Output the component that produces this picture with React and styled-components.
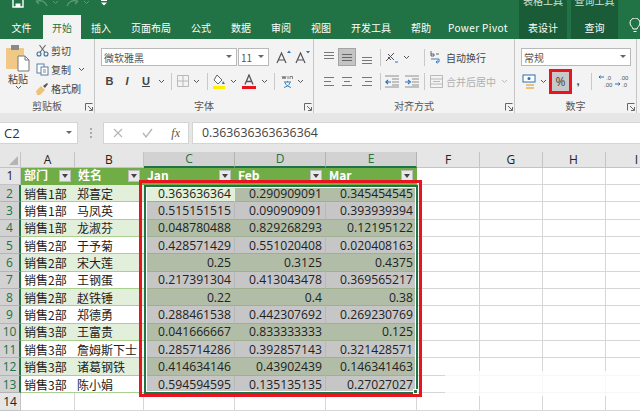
import React from "react";
import styled, { createGlobalStyle } from "styled-components";

const Global = createGlobalStyle`
  html, body { margin: 0; padding: 0; background: #fff; }
  body { font-family: "Noto Sans CJK SC", "Noto Sans", sans-serif; }
`;

const Page = styled.div`
  width: 640px;
  height: 411px;
  overflow: hidden;
  display: flex;
  flex-direction: column;
  background: #fff;
`;

// green title + tabs
const Head = styled.div`
  height: 39px;
  flex: none;
  display: flex;
  background: #217346;
  color: #fff;
  font-size: 10px;
`;
const HeadMain = styled.div`
  width: 519px;
  flex: none;
  display: flex;
  flex-direction: column;
`;
const Qat = styled.div`
  height: 15px;
  display: flex;
  align-items: flex-start;
  padding-left: 12px;
  overflow: hidden;
`;
const QatItem = styled.div`
  margin-left: ${(p) => p.$ml}px;
  display: flex;
  flex: none;
`;
const Tabs = styled.div`
  height: 24px;
  display: flex;
`;
const Tab = styled.div`
  width: ${(p) => p.$w}px;
  display: flex;
  align-items: center;
  justify-content: center;
  white-space: nowrap;
  background: ${(p) => (p.$active ? "#f3f3f3" : "transparent")};
  color: ${(p) => (p.$active ? "#217346" : "#fff")};
  letter-spacing: ${(p) => (p.$sp ? "0.4px" : "0")};
`;
const Context = styled.div`
  width: ${(p) => p.$w}px;
  margin-right: ${(p) => p.$gap}px;
  flex: none;
  background: #1a5c38;
  display: flex;
  flex-direction: column;
  align-items: center;
`;
const ContextTitle = styled.div`
  height: 15px;
  width: 100%;
  overflow: hidden;
  text-align: center;
  line-height: 1px;
  color: #cfe3d7;
  white-space: nowrap;
`;
const ContextTab = styled.div`
  height: 24px;
  display: flex;
  align-items: center;
`;
const Bulb = styled.div`
  margin: 18px 0 0 11px;
`;

// ribbon
const Ribbon = styled.div`
  height: 74px;
  flex: none;
  display: flex;
  background: #f3f3f3;
  color: #444;
  font-size: 10px;
`;
const Group = styled.div`
  position: relative;
  width: ${(p) => p.$w}px;
  flex: none;
  display: flex;
  flex-direction: column;
  box-sizing: border-box;
  border-right: 1px solid #c6c6c6;
`;
const GroupBody = styled.div`
  height: 58px;
  box-sizing: border-box;
  padding: 9px 0 0 ${(p) => p.$pad || 0}px;
  display: ${(p) => (p.$row ? "flex" : "block")};
`;
const GroupLabel = styled.div`
  height: 16px;
  line-height: 17px;
  text-align: center;
  color: #555;
`;
const Launcher = styled.div`
  position: absolute;
  right: 1px;
  bottom: 2px;
  display: flex;
`;
const PasteCol = styled.div`
  width: 36px;
  margin-top: -3px;
  display: flex;
  flex-direction: column;
  align-items: center;
  line-height: 13px;
`;
const ClipCol = styled.div`
  margin-top: -5px;
  display: flex;
  flex-direction: column;
  gap: 4px;
`;
const ClipRow = styled.div`
  height: 15px;
  display: flex;
  align-items: center;
  gap: 2px;
  white-space: nowrap;
`;
const ToolRow = styled.div`
  height: ${(p) => p.$h || 20}px;
  margin-bottom: ${(p) => p.$mb || 0}px;
  display: flex;
  align-items: center;
`;
const Slot = styled.div`
  width: ${(p) => p.$w}px;
  flex: none;
  display: flex;
  align-items: center;
  justify-content: center;
  font-family: "Liberation Sans", sans-serif;
  font-size: 11px;
  color: #444;
`;
const Sep = styled.div`
  width: ${(p) => p.$w}px;
  flex: none;
  height: 17px;
  background: linear-gradient(#c9c9c9, #c9c9c9) center / 1px 100% no-repeat;
`;
const Combo = styled.div`
  width: ${(p) => p.$w}px;
  height: 18px;
  margin-right: ${(p) => p.$mr || 0}px;
  flex: none;
  box-sizing: border-box;
  background: #fff;
  border: 1px solid #b9b9b9;
  display: flex;
  align-items: center;
  justify-content: space-between;
  padding: 0 4px 0 2px;
  color: #555;
`;
const SelectedBtn = styled.div`
  width: 18px;
  height: 18px;
  flex: none;
  box-sizing: border-box;
  background: #c4c4c4;
  border: 1px solid #a4a4a4;
  display: flex;
  align-items: center;
  justify-content: center;
`;
const PercentBtn = styled.div`
  width: 23px;
  height: 25px;
  flex: none;
  box-sizing: border-box;
  background: #c8c8c8;
  border: 3px solid #e8141f;
  display: flex;
  align-items: center;
  justify-content: center;
  font-family: "Open Sans", sans-serif;
  font-size: 12px;
  color: #444;
`;
const WrapText = styled.div`
  white-space: nowrap;
  color: ${(p) => (p.$off ? "#b0b0b0" : "#444")};
`;

// formula bar
const FormulaBar = styled.div`
  height: 39px;
  flex: none;
  box-sizing: border-box;
  padding: 9px 0 8px;
  display: flex;
  background: #e6e6e6;
`;
const NameBox = styled.div`
  width: 78px;
  box-sizing: border-box;
  background: #fff;
  border: 1px solid #d4d4d4;
  border-left: 0;
  display: flex;
  align-items: center;
  justify-content: space-between;
  padding: 0 5px 0 4px;
  font-family: "Open Sans", sans-serif;
  font-size: 13px;
  color: #333;
`;
const Dots = styled.div`
  width: 25px;
  display: flex;
  align-items: center;
  justify-content: center;
`;
const FnBox = styled.div`
  width: 86px;
  margin-right: 3px;
  box-sizing: border-box;
  background: #fff;
  border: 1px solid #d4d4d4;
  display: flex;
  align-items: center;
  justify-content: space-between;
  padding: 0 8px 0 9px;
`;
const Fx = styled.i`
  font-family: "Liberation Serif", serif;
  color: #555;
  font-size: 12px;
`;
const FormulaInput = styled.div`
  flex: 1;
  box-sizing: border-box;
  background: #fff;
  border: 1px solid #d4d4d4;
  border-right: 0;
  padding-left: 9px;
  line-height: 20px;
  font-family: "Open Sans", sans-serif;
  font-size: 12.3px;
  color: #444;
`;

// sheet
const SheetWrap = styled.div`
  position: relative;
  flex: 1;
  overflow: hidden;
`;
const Sheet = styled.div`
  display: grid;
  grid-template-columns: 21px 54px 69px 91px 91px 91px 63px 62.500px 63px 63px;
  grid-template-rows: 15.5px repeat(14, 17.36px);
  font-size: 12px;
  color: #222;
`;
const Corner = styled.div`
  background: #e6e6e6;
  border-right: 1px solid #c4c4c4;
  border-bottom: 1px solid #c4c4c4;
  box-sizing: border-box;
  display: flex;
  align-items: flex-end;
  justify-content: flex-end;
  padding: 0 2px 2px 0;
`;
const ColHead = styled.div`
  background: ${(p) => (p.$sel ? "#d2d2d2" : "#e6e6e6")};
  color: ${(p) => (p.$sel ? "#217346" : "#222")};
  border-right: 1px solid ${(p) => (p.$sel ? "#b4b4b4" : "#c4c4c4")};
  border-bottom: ${(p) => (p.$sel ? "2px solid #217346" : "1px solid #c4c4c4")};
  box-sizing: border-box;
  display: flex;
  align-items: center;
  justify-content: center;
  font-family: "Open Sans", sans-serif;
  font-size: 12px;
`;
const RowHead = styled.div`
  background: ${(p) => (p.$sel ? "#d2d2d2" : "#e6e6e6")};
  color: ${(p) => (p.$sel ? "#217346" : "#222")};
  border-right: ${(p) => (p.$sel ? "2px solid #217346" : "1px solid #c4c4c4")};
  border-bottom: 1px solid ${(p) => (p.$sel ? "#b4b4b4" : "#c4c4c4")};
  box-sizing: border-box;
  display: flex;
  align-items: center;
  justify-content: center;
  font-family: "Open Sans", sans-serif;
  font-size: 12px;
`;
const FieldHead = styled.div`
  background: #70ad47;
  color: #fff;
  font-weight: 700;
  box-sizing: border-box;
  padding: 0 3px 0 3px;
  display: flex;
  align-items: center;
  justify-content: space-between;
  border-right: 1px solid #70ad47;
  white-space: nowrap;
`;
const FieldName = styled.span`
  line-height: 12px;
  margin-top: -3px;
`;
const FilterBtn = styled.div`
  width: 12px;
  height: 12px;
  background: #e9e9e9;
  border: 1px solid #bcbcbc;
  box-sizing: border-box;
  display: flex;
  align-items: center;
  justify-content: center;
  flex: none;
  &::after {
    content: "";
    border: 3px solid transparent;
    border-top: 4px solid #444;
    margin-top: 3px;
  }
`;
const TextCell = styled.div`
  background: ${(p) => (p.$band ? "#e2efda" : "#fff")};
  border-bottom: 1px solid #a9d08e;
  box-sizing: border-box;
  padding-left: ${(p) => p.$pad}px;
  display: flex;
  align-items: center;
  white-space: nowrap;
  overflow: hidden;
`;
const NumCell = styled.div`
  background: ${(p) => (p.$active ? "#e2efda" : p.$band ? "#b2bda8" : "#c6c6c6")};
  border-bottom: 1px solid #9fb090;
  border-right: 1px solid ${(p) => (p.$active ? "#e2efda" : p.$band ? "#b2bda8" : "#b8b8b8")};
  box-sizing: border-box;
  padding-right: 3px;
  display: flex;
  align-items: center;
  justify-content: flex-end;
  font-family: "Open Sans", sans-serif;
  font-size: 12.2px;
  color: #222;
`;
const Blank = styled.div`
  border-right: 1px solid #d6d6d6;
  border-bottom: 1px solid #d6d6d6;
  box-sizing: border-box;
`;
const Selection = styled.div`
  position: absolute;
  left: 144px;
  top: 33px;
  width: 274px;
  height: 209px;
  box-sizing: border-box;
  border: 2px solid #217346;
  outline: 1px solid #fff;
  outline-offset: -3px;
  &::after {
    content: "";
    position: absolute;
    right: -2px;
    bottom: -2px;
    width: 5px;
    height: 5px;
    background: #217346;
    border: 1px solid #fff;
    box-sizing: border-box;
  }
`;
const RedBox = styled.div`
  position: absolute;
  left: 139px;
  top: 28px;
  width: 283px;
  height: 217px;
  box-sizing: border-box;
  border: 3px solid #e8141f;
`;
// the faint smear a watermark left over the grid
const Smear = styled.div`
  position: absolute;
  left: 445px;
  right: 0;
  top: 219px;
  height: 25px;
  background: rgba(255, 255, 255, 0.8);
`;

const Chev = ({ c = "#555" }) => (
  <svg width="7" height="5" viewBox="0 0 7 5"><path d="M1 1l2.5 2.5L6 1" fill="none" stroke={c} strokeWidth="1" /></svg>
);
const Caret = () => (
  <svg width="6" height="4" viewBox="0 0 6 4"><path d="M0 0h6L3 3z" fill="#666" /></svg>
);
const Lines = ({ widths, y = [2, 6, 10], c = "#777" }) => (
  <svg width="14" height="13" viewBox="0 0 14 13">
    {y.map((v, i) => (
      <rect key={i} x={widths[i][0]} y={v} width={widths[i][1]} height="1" fill={c} />
    ))}
  </svg>
);
const LauncherIcon = () => (
  <svg width="8" height="8" viewBox="0 0 8 8" fill="none" stroke="#666">
    <path d="M.5 7.500V.5h7" />
    <path d="M7.500 4v3.500H4M7 7L3 3" />
  </svg>
);
const PasteIcon = () => (
  <svg width="24" height="27" viewBox="0 0 24 27">
    <rect x="0" y="3" width="18" height="21" rx="1" fill="#f0c987" />
    <rect x="5" y="0" width="8" height="5" fill="#8a8a8a" />
    <path d="M12 11h7l4 4v11H12z" fill="#fff" stroke="#777" />
    <path d="M19 11v4h4" fill="none" stroke="#777" />
  </svg>
);
const CutIcon = () => (
  <svg width="13" height="13" viewBox="0 0 13 13" fill="none" stroke="#3c6ea5" strokeWidth="1.1">
    <circle cx="3" cy="10" r="2" />
    <circle cx="10" cy="10" r="2" />
    <path d="M4 8.5L9.5 1M9 8.5L3.5 1" stroke="#666" />
  </svg>
);
const CopyIcon = () => (
  <svg width="13" height="13" viewBox="0 0 13 13" fill="#fff" stroke="#5b7fa5">
    <rect x="1" y="1" width="7" height="9" />
    <rect x="5" y="4" width="7" height="8" />
    <path d="M7 7h3M7 9h3" stroke="#888" />
  </svg>
);
const BrushIcon = () => (
  <svg width="13" height="13" viewBox="0 0 13 13">
    <path d="M0 9l5-5 4 4-5 5H1z" fill="#efc27a" />
    <path d="M7 4l4-3 1 1-3 4z" fill="#555" />
  </svg>
);
const BigA = ({ up }) => (
  <svg width="15" height="15" viewBox="0 0 15 15">
    <path d="M1 13L5.5 3 10 13M3 10h5" fill="none" stroke="#555" strokeWidth="1.2" />
    <path d={up ? "M11 3l2-2.5L15 3z" : "M11 1h4l-2 2.5z"} fill="#2b6fb5" />
  </svg>
);
const BordersIcon = () => (
  <svg width="12" height="12" viewBox="0 0 12 12" fill="none" stroke="#b9b9b9">
    <path d="M.5.5h11v11H.5zM6 .5v11M.5 6h11" />
  </svg>
);
const FillIcon = () => (
  <svg width="14" height="15" viewBox="0 0 14 15">
    <path d="M5 1l5 5-4 4-4-4z" fill="#fff" stroke="#666" />
    <path d="M11 7l2 3h-3z" fill="#2b6fb5" />
    <rect x="1" y="12" width="12" height="3" fill="#ffee00" />
  </svg>
);
const FontColorIcon = () => (
  <svg width="14" height="15" viewBox="0 0 14 15">
    <path d="M3 10.5L7 1l4 9.5M4.5 7.5h5" fill="none" stroke="#555" strokeWidth="1.3" />
    <rect x="0" y="12" width="14" height="3" fill="#e8141f" />
  </svg>
);
const WenIcon = () => (
  <svg width="13" height="14" viewBox="0 0 13 14" fill="none">
    <path d="M1 2l1 3 1-3 1 3 1-3M7 5V2M9 5V2.5h2.5V5" stroke="#666" strokeWidth=".8" />
    <path d="M3 8h7M6.5 7v1M4 8.500c1 3 3 4 6 5M9 8.500c-1 3-3 4-6 5" stroke="#2b6fb5" strokeWidth=".9" />
  </svg>
);
const OrientIcon = () => (
  <svg width="14" height="13" viewBox="0 0 14 13" fill="none" stroke="#555">
    <path d="M1 10l8-8M3 6l3 3M3 3l6 6" strokeWidth="1" />
    <path d="M10 11h3" stroke="#2b6fb5" />
  </svg>
);
const IndentIcon = ({ right }) => (
  <svg width="14" height="13" viewBox="0 0 14 13">
    <path d="M0 1h14M7 4h7M7 7h7M7 10h7M0 12h14" stroke="#777" strokeWidth=".8" />
    <path d={right ? "M0 7h4M3 5l2.500 2L3 9" : "M6 7H1M3 5L.8 7 3 9"} fill="none" stroke="#2b6fb5" strokeWidth="1.1" />
  </svg>
);
const WrapIcon = () => (
  <svg width="12" height="15" viewBox="0 0 12 15" fill="none" stroke="#555" strokeWidth=".9">
    <path d="M1 1v5h3V4H1M6 4h3" />
    <path d="M1 9h8v3H6M7.500 10.500L6 12l1.500 1.500" stroke="#2b6fb5" />
  </svg>
);
const MergeIcon = () => (
  <svg width="13" height="13" viewBox="0 0 13 13" fill="none" stroke="#b9b9b9">
    <path d="M.5.5h12v12H.5zM.5 4h12M.5 9h12M3 6.500h7" />
  </svg>
);
const MoneyIcon = () => (
  <svg width="14" height="15" viewBox="0 0 14 15">
    <rect x="1" y="1" width="12" height="7" fill="#fff" stroke="#2b6fb5" />
    <circle cx="7" cy="4.500" r="1.500" fill="#2b6fb5" />
    <rect x="4" y="10" width="8" height="2" fill="#efc27a" />
    <rect x="4" y="13" width="8" height="2" fill="#efc27a" />
  </svg>
);
const DecIcon = ({ flip }) => (
  <svg width="15" height="14" viewBox="0 0 15 14" fontFamily="Liberation Sans" fontSize="6" fill="#555">
    <text x={flip ? 5 : 7} y="6">{flip ? ".00" : ".0"}</text>
    <text x={flip ? 7 : 5} y="13">{flip ? ".0" : ".00"}</text>
    <path d={flip ? "M0 10h5M3.500 8.500L5 10l-1.500 1.500" : "M5 3H0M1.500 1.500L0 3l1.500 1.500"} stroke="#2b6fb5" fill="none" />
  </svg>
);
const SaveIcon = () => (
  <svg width="12" height="10" viewBox="0 0 12 10">
    <path d="M1 -3h10v10H1z" fill="none" stroke="#fff" strokeWidth="1.400" />
    <rect x="3.500" y="3.500" width="5" height="3.500" fill="#fff" />
  </svg>
);
const ArrowIcon = ({ flip }) => (
  <svg width="13" height="7" viewBox="0 0 13 7" style={flip ? { transform: "scaleX(-1)" } : undefined}>
    <path d="M1 1l3 3M1 1h4M1 1c5-1 9 0 11 5" fill="none" stroke="#5f9a7a" strokeWidth="1.200" />
  </svg>
);
const QatMenuIcon = () => (
  <svg width="6" height="6" viewBox="0 0 6 6"><path d="M0 0h6v1H0zM0 2.500h6L3 5.500z" fill="#fff" /></svg>
);
const BulbIcon = () => (
  <svg width="12" height="16" viewBox="0 0 12 16" fill="none" stroke="#fff">
    <path d="M4 11c0-2-3-3-3-6a5 5 0 0 1 10 0c0 3-3 4-3 6zM4.500 13.500h3" />
  </svg>
);
const CrossIcon = () => (
  <svg width="10" height="10" viewBox="0 0 10 10"><path d="M1 1l8 8M9 1l-8 8" stroke="#b5b5b5" strokeWidth="1.100" /></svg>
);
const CheckIcon = () => (
  <svg width="11" height="10" viewBox="0 0 11 10"><path d="M1 5l3 4 6-8" fill="none" stroke="#b5b5b5" strokeWidth="1.300" /></svg>
);
const GripIcon = () => (
  <svg width="2" height="10" viewBox="0 0 2 10" fill="#aaa">
    <rect y="0" width="2" height="2" /><rect y="4" width="2" height="2" /><rect y="8" width="2" height="2" />
  </svg>
);

const tabs = [
  ["文件", 43], ["开始", 38, true], ["插入", 40], ["页面布局", 60], ["公式", 40], ["数据", 40],
  ["审阅", 40], ["视图", 40], ["开发工具", 60], ["帮助", 40], ["Power Pivot", 74],
];

const people = [
  ["销售1部", "郑喜定"], ["销售1部", "马凤英"], ["销售1部", "龙淑芬"], ["销售2部", "于予菊"],
  ["销售2部", "宋大莲"], ["销售2部", "王钢蛋"], ["销售2部", "赵铁锤"], ["销售2部", "郑德勇"],
  ["销售3部", "王富贵"], ["销售3部", "詹姆斯下士"], ["销售3部", "诸葛钢铁"], ["销售3部", "陈小娟"],
];
const values = [
  ["0.363636364", "0.290909091", "0.345454545"],
  ["0.515151515", "0.090909091", "0.393939394"],
  ["0.048780488", "0.829268293", "0.12195122"],
  ["0.428571429", "0.551020408", "0.020408163"],
  ["0.25", "0.3125", "0.4375"],
  ["0.217391304", "0.413043478", "0.369565217"],
  ["0.22", "0.4", "0.38"],
  ["0.288461538", "0.442307692", "0.269230769"],
  ["0.041666667", "0.833333333", "0.125"],
  ["0.285714286", "0.392857143", "0.321428571"],
  ["0.414634146", "0.43902439", "0.146341463"],
  ["0.594594595", "0.135135135", "0.27027027"],
];
const blanks = [0, 1, 2, 3];

export default function App() {
  return (
    <Page>
      <Global />
      <Head>
        <HeadMain>
          <Qat>
            <SaveIcon />
            <QatItem $ml={11}><ArrowIcon /></QatItem>
            <QatItem $ml={4}><Chev c="#5f9a7a" /></QatItem>
            <QatItem $ml={7}><ArrowIcon flip /></QatItem>
            <QatItem $ml={4}><Chev c="#5f9a7a" /></QatItem>
            <QatItem $ml={11}><QatMenuIcon /></QatItem>
          </Qat>
          <Tabs>
            {tabs.map(([t, w, active]) => (
              <Tab key={t} $w={w} $active={active} $sp={t === "Power Pivot"}>{t}</Tab>
            ))}
          </Tabs>
        </HeadMain>
        <Context $w={48} $gap={4}>
          <ContextTitle>表格工具</ContextTitle>
          <ContextTab>表设计</ContextTab>
        </Context>
        <Context $w={47} $gap={0}>
          <ContextTitle>查询工具</ContextTitle>
          <ContextTab>查询</ContextTab>
        </Context>
        <Bulb><BulbIcon /></Bulb>
      </Head>

      <Ribbon>
        <Group $w={95}>
          <GroupBody $row>
            <PasteCol>
              <PasteIcon />
              <span>粘贴</span>
              <Chev />
            </PasteCol>
            <ClipCol>
              <ClipRow><CutIcon />剪切</ClipRow>
              <ClipRow><CopyIcon />复制<Slot $w={16}><Chev /></Slot></ClipRow>
              <ClipRow><BrushIcon />格式刷</ClipRow>
            </ClipCol>
          </GroupBody>
          <GroupLabel>剪贴板</GroupLabel>
          <Launcher><LauncherIcon /></Launcher>
        </Group>

        <Group $w={219}>
          <GroupBody $pad={6}>
            <ToolRow $h={18} $mb={5}>
              <Combo $w={136} $mr={1}>微软雅黑<Caret /></Combo>
              <Combo $w={31} $mr={5}>11<Caret /></Combo>
              <Slot $w={18}><BigA up /></Slot>
              <Slot $w={20}><BigA /></Slot>
            </ToolRow>
            <ToolRow>
              <Slot $w={17}><b>B</b></Slot>
              <Slot $w={18}><b><i>I</i></b></Slot>
              <Slot $w={20}><b><u>U</u></b></Slot>
              <Slot $w={10}><Chev /></Slot>
              <Sep $w={10} />
              <Slot $w={14}><BordersIcon /></Slot>
              <Slot $w={13}><Chev /></Slot>
              <Sep $w={8} />
              <Slot $w={16}><FillIcon /></Slot>
              <Slot $w={13}><Chev /></Slot>
              <Slot $w={18}><FontColorIcon /></Slot>
              <Slot $w={12}><Chev /></Slot>
              <Sep $w={9} />
              <Slot $w={16}><WenIcon /></Slot>
              <Slot $w={10}><Chev /></Slot>
            </ToolRow>
          </GroupBody>
          <GroupLabel>字体</GroupLabel>
          <Launcher><LauncherIcon /></Launcher>
        </Group>

        <Group $w={201}>
          <GroupBody $pad={6}>
            <ToolRow $h={18} $mb={5}>
              <Slot $w={18}><Lines widths={[[2, 10], [2, 10], [2, 10]]} y={[1, 4, 7]} /></Slot>
              <SelectedBtn><Lines widths={[[2, 10], [2, 10], [2, 10]]} y={[3, 6, 9]} c="#666" /></SelectedBtn>
              <Slot $w={22}><Lines widths={[[2, 10], [2, 10], [2, 10]]} y={[6, 9, 12]} /></Slot>
              <Sep $w={4} />
              <Slot $w={20}><OrientIcon /></Slot>
              <Slot $w={8}><Chev /></Slot>
              <Slot $w={12} />
              <Sep $w={4} />
              <Slot $w={20}><WrapIcon /></Slot>
              <WrapText>自动换行</WrapText>
            </ToolRow>
            <ToolRow>
              <Slot $w={18}><Lines widths={[[2, 10], [2, 7], [2, 10]]} /></Slot>
              <Slot $w={18}><Lines widths={[[2, 10], [4, 6], [2, 10]]} /></Slot>
              <Slot $w={22}><Lines widths={[[2, 10], [5, 7], [2, 10]]} /></Slot>
              <Sep $w={4} />
              <Slot $w={20}><IndentIcon /></Slot>
              <Slot $w={20}><IndentIcon right /></Slot>
              <Sep $w={4} />
              <Slot $w={20}><MergeIcon /></Slot>
              <WrapText $off>合并后居中</WrapText>
              <Slot $w={16}><Chev c="#bbb" /></Slot>
            </ToolRow>
          </GroupBody>
          <GroupLabel>对齐方式</GroupLabel>
          <Launcher><LauncherIcon /></Launcher>
        </Group>

        <Group $w={122}>
          <GroupBody $pad={6}>
            <ToolRow $h={18} $mb={5}>
              <Combo $w={110}>常规<Caret /></Combo>
            </ToolRow>
            <ToolRow>
              <Slot $w={16}><MoneyIcon /></Slot>
              <Slot $w={12}><Chev /></Slot>
              <PercentBtn>%</PercentBtn>
              <Slot $w={12}><b>,</b></Slot>
              <Sep $w={14} />
              <Slot $w={16}><DecIcon /></Slot>
              <Slot $w={17}><DecIcon flip /></Slot>
            </ToolRow>
          </GroupBody>
          <GroupLabel>数字</GroupLabel>
          <Launcher><LauncherIcon /></Launcher>
        </Group>
      </Ribbon>

      <FormulaBar>
        <NameBox>C2<Caret /></NameBox>
        <Dots><GripIcon /></Dots>
        <FnBox>
          <CrossIcon />
          <CheckIcon />
          <Fx>fx</Fx>
        </FnBox>
        <FormulaInput>0.363636363636364</FormulaInput>
      </FormulaBar>

      <SheetWrap>
        <Sheet>
          <Corner>
            <svg width="9" height="9" viewBox="0 0 9 9"><path d="M9 0v9H0z" fill="#b4b4b4" /></svg>
          </Corner>
          {["A", "B", "C", "D", "E", "F", "G", "H", "I"].map((c) => (
            <ColHead key={c} $sel={"CDE".includes(c)}>{c}</ColHead>
          ))}

          <RowHead>1</RowHead>
          {["部门", "姓名", "Jan", "Feb", "Mar"].map((t) => (
            <FieldHead key={t}><FieldName>{t}</FieldName><FilterBtn /></FieldHead>
          ))}
          {blanks.map((b) => <Blank key={b} />)}

          {people.map(([dept, name], i) => (
            <React.Fragment key={name}>
              <RowHead $sel>{i + 2}</RowHead>
              <TextCell $pad={3} $band={i % 2 === 0}>{dept}</TextCell>
              <TextCell $pad={2} $band={i % 2 === 0}>{name}</TextCell>
              {values[i].map((v, j) => (
                <NumCell key={j} $band={i % 2 === 0} $active={i === 0 && j === 0}>{v}</NumCell>
              ))}
              {blanks.map((b) => <Blank key={b} />)}
            </React.Fragment>
          ))}

          <RowHead>14</RowHead>
          <Blank /><Blank /><Blank /><Blank /><Blank />
          {blanks.map((b) => <Blank key={b} />)}
        </Sheet>
        <Selection />
        <RedBox />
        <Smear />
      </SheetWrap>
    </Page>
  );
}
